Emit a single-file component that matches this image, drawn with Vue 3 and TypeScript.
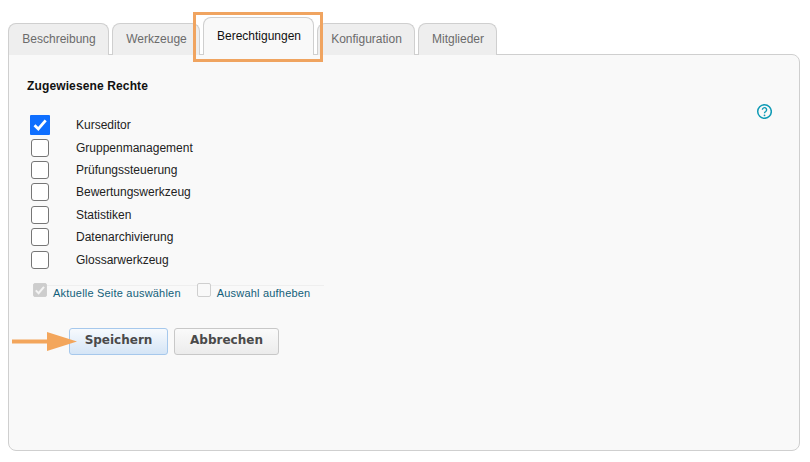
<script setup lang="ts">
const tabs = [
  { label: 'Beschreibung', active: false },
  { label: 'Werkzeuge', active: false },
  { label: 'Berechtigungen', active: true },
  { label: 'Konfiguration', active: false },
  { label: 'Mitglieder', active: false },
]
const rights = [
  { label: 'Kurseditor', checked: true },
  { label: 'Gruppenmanagement', checked: false },
  { label: 'Prüfungssteuerung', checked: false },
  { label: 'Bewertungswerkzeug', checked: false },
  { label: 'Statistiken', checked: false },
  { label: 'Datenarchivierung', checked: false },
  { label: 'Glossarwerkzeug', checked: false },
]
</script>

<template>
  <div class="page">
    <div class="tabs">
      <div v-for="t in tabs" :key="t.label" class="tab" :class="{ active: t.active }">{{ t.label }}</div>
    </div>
    <div class="panel">
      <div class="title">Zugewiesene Rechte</div>
      <svg class="help" width="16" height="16" viewBox="0 0 16 16" aria-label="Hilfe">
        <circle cx="8.5" cy="8.5" r="6.8" fill="none" stroke="#0e9ab5" stroke-width="1.5" />
        <path d="M6.4 6.8a2.1 2.1 0 1 1 3.3 1.7c-.8.5-1.2.9-1.2 1.8" fill="none" stroke="#0e9ab5" stroke-width="1.4" />
        <circle cx="8.5" cy="12.3" r=".9" fill="#0e9ab5" />
      </svg>
      <div class="rights">
        <div v-for="r in rights" :key="r.label" class="right">
          <span class="box" :class="{ checked: r.checked }">
            <svg v-if="r.checked" width="20" height="20" viewBox="0 0 20 20">
              <path d="M4.5 10.2l3.8 3.8 7.4-8.6" fill="none" stroke="#fff" stroke-width="2.8" />
            </svg>
          </span>
          <span class="label">{{ r.label }}</span>
        </div>
      </div>
      <div class="select-bar">
        <span class="mini disabled">
          <svg width="14" height="14" viewBox="0 0 14 14">
            <path d="M2.8 7.4l2.8 2.8 5.4-6.4" fill="none" stroke="#f4f4f4" stroke-width="2" />
          </svg>
        </span>
        <span class="link first">Aktuelle Seite auswählen</span>
        <span class="mini"></span>
        <span class="link">Auswahl aufheben</span>
      </div>
      <div class="buttons">
        <button class="btn primary" type="button">Speichern</button>
        <button class="btn" type="button">Abbrechen</button>
      </div>
    </div>
    <div class="tab-mark"></div>
    <svg class="arrow" width="66" height="20" viewBox="0 0 66 20">
      <path d="M0 7.5H35V0L65 9.5 35 19V11.5H0z" fill="#f3a65c" />
    </svg>
  </div>
</template>

<style scoped>
.page {
  position: relative;
  width: 810px;
  height: 462px;
  background: #fff;
  box-sizing: border-box;
  padding: 17px 10px 0 8px;
  font-family: "Liberation Sans", Arial, sans-serif;
  font-size: 12px;
  color: #222;
  overflow: hidden;
}
.tabs {
  display: flex;
  align-items: flex-end;
  gap: 3px;
  height: 38px;
  position: relative;
  z-index: 1;
  margin-bottom: -1px;
}
.tab {
  box-sizing: border-box;
  height: 32px;
  padding: 7px 0 0 1px;
  text-align: center;
  border: 1px solid #cfcfcf;
  border-bottom: 0;
  border-radius: 8px 8px 0 0;
  background: #eee;
  color: #6b6b6b;
  line-height: 16px;
  font-size: 12px;
}
.tab:nth-child(1) { width: 101px; }
.tab:nth-child(2) { width: 88px; }
.tab:nth-child(3) { width: 111px; }
.tab:nth-child(4) { width: 98px; }
.tab:nth-child(5) { width: 79px; }
.tab.active {
  height: 38px;
  padding-top: 10px;
  background: #f9f9f9;
  color: #111;
}
.panel {
  position: relative;
  box-sizing: border-box;
  height: 397px;
  border: 1px solid #cfcfcf;
  border-radius: 0 8px 8px 8px;
  background: #f9f9f9;
  padding: 23px 0 0 18px;
}
.title {
  font-weight: bold;
  font-size: 12px;
  line-height: 16px;
  color: #111;
  letter-spacing: 0.13px;
}
.help {
  position: absolute;
  top: 48px;
  right: 27px;
}
.rights {
  margin-top: 20px;
  margin-left: 3px;
}
.right {
  display: flex;
  align-items: center;
  height: 22.4px;
}
.box {
  box-sizing: border-box;
  flex: none;
  width: 18px;
  height: 18px;
  border: 1px solid #767676;
  border-radius: 3px;
  background: #fff;
  margin-left: 1px;
  display: block;
}
.box.checked {
  background: #0f6fff;
  border: 0;
  width: 20px;
  height: 20px;
  margin-left: 0;
  border-radius: 1px;
}
.box.checked svg { display: block; }
.label {
  margin-left: 27px;
  color: #222;
}
.right:first-child .label { margin-left: 26px; }
.select-bar {
  display: flex;
  align-items: flex-start;
  margin: 14px 0 0 6px;
  width: 291px;
  height: 17px;
  border-top: 1px solid #efefef;
}
.mini {
  box-sizing: border-box;
  flex: none;
  width: 14px;
  height: 14px;
  margin-top: -3px;
  border: 1px solid #cfcfcf;
  border-radius: 2px;
  background: #f9f9f9;
  position: relative;
}
.mini.disabled {
  background: #cdcdcd;
}
.mini.disabled svg {
  position: absolute;
  top: -1px;
  left: -1px;
}
.link {
  font-size: 11px;
  letter-spacing: 0.2px;
  line-height: 13px;
  color: #12607a;
  margin-left: 6px;
  margin-top: 1px;
}
.link.first { margin-right: 16px; }
.buttons {
  display: flex;
  gap: 6px;
  margin: 25px 0 0 42px;
}
.btn {
  box-sizing: border-box;
  width: 105px;
  height: 27px;
  padding: 0 0 2px;
  border: 1px solid #c8c8c8;
  border-radius: 3px;
  background: linear-gradient(#fafafa, #ececec);
  color: #4a4a4a;
  font-family: "DejaVu Sans", Verdana, sans-serif;
  font-weight: bold;
  font-size: 12px;
}
.btn.primary {
  width: 99px;
  border-color: #a6c8ec;
  background: linear-gradient(#f7fafd, #d5e5f6);
}
.tab-mark {
  position: absolute;
  left: 193px;
  top: 12px;
  width: 130px;
  height: 50px;
  box-sizing: border-box;
  border: 3px solid #f0a460;
  z-index: 2;
  pointer-events: none;
}
.arrow {
  position: absolute;
  left: 12px;
  top: 332px;
  z-index: 2;
}
</style>
